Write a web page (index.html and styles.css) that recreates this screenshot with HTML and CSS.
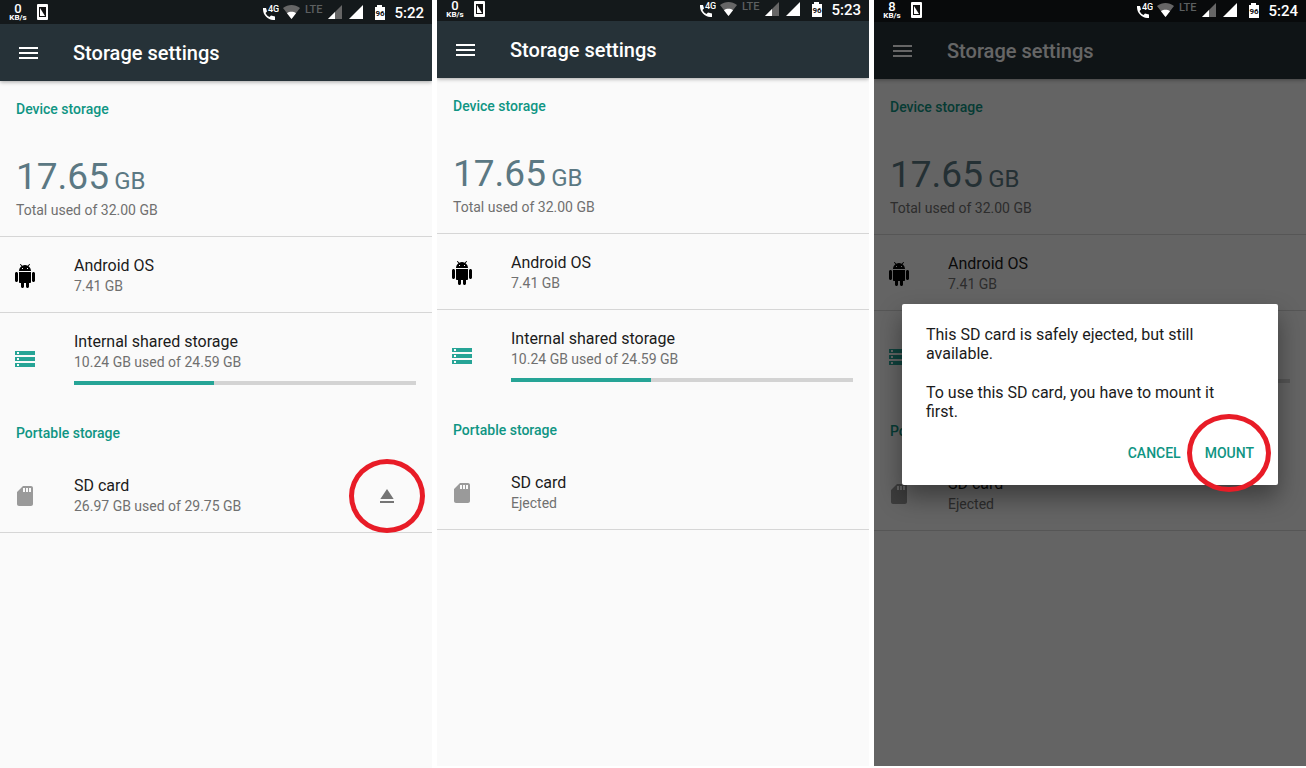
FILE: index.html
```html
<!DOCTYPE html>
<html lang="en">
<head>
	<meta charset="UTF-8">
	<title>Storage settings</title>
	<link rel="stylesheet" href="styles.css">
</head>
<body>
	<!-- shared icons -->
	<svg class="sprite" aria-hidden="true">
		<symbol id="i-card" viewBox="0 0 11 16">
			<rect width="11" height="16" rx="1" fill="#fff"/>
			<path d="M2 3h7v10H2z" fill="#111"/>
			<path d="M3 4v8h5z" fill="#fff"/>
		</symbol>
		<symbol id="i-call" viewBox="0 0 16 16">
			<path d="M0 4h3l1 3.500-1.500 1.500c1 2 2 3 4 4L8 11.500l4 1V16C5 16.500-.500 11 0 4z" fill="#fff"/>
			<text x="5" y="8" font-size="9" font-weight="500" fill="#fff">4G</text>
		</symbol>
		<symbol id="i-wifi" viewBox="0 0 18 16">
			<path d="M0 4C5 0 12 0 17 4L8.500 15z" fill="#666"/>
			<path d="M4 9.200C6.500 7.300 10.500 7.300 13 9.200L8.500 15z" fill="#fff"/>
		</symbol>
		<symbol id="i-signal-low" viewBox="0 0 18 16">
			<path d="M16 1v14H2z" fill="#666"/>
			<path d="M9 8v7H2z" fill="#fff"/>
		</symbol>
		<symbol id="i-signal" viewBox="0 0 18 16">
			<path d="M15 1v14H1z" fill="#fff"/>
		</symbol>
		<symbol id="i-battery" viewBox="0 0 20 16">
			<path d="M7 1h5v2h3v13H5V3h2z" fill="#fff"/>
			<text x="10" y="12" font-size="8" font-weight="700" text-anchor="middle" fill="#111">96</text>
		</symbol>
		<symbol id="i-menu" viewBox="0 0 24 24">
			<path d="M3 6h19v2H3zM3 11h19v2H3zM3 16h19v2H3z" fill="currentColor"/>
		</symbol>
		<symbol id="i-android" viewBox="0 0 24 24">
			<path d="M6 18c0 .55.45 1 1 1h1v3.500c0 .83.67 1.500 1.500 1.500s1.500-.67 1.500-1.500V19h2v3.500c0 .83.67 1.500 1.500 1.500s1.500-.67 1.500-1.500V19h1c.55 0 1-.45 1-1V8H6v10zM3.500 8C2.670 8 2 8.670 2 9.500v7c0 .83.67 1.500 1.500 1.500S5 17.330 5 16.500v-7C5 8.670 4.330 8 3.500 8zm17 0c-.83 0-1.500.67-1.500 1.500v7c0 .83.67 1.500 1.500 1.500s1.500-.67 1.500-1.500v-7c0-.83-.67-1.500-1.500-1.500zm-4.970-5.840l1.300-1.300c.2-.2.2-.51 0-.71-.2-.2-.51-.2-.71 0l-1.480 1.480C13.850 1.230 12.950 1 12 1c-.96 0-1.860.23-2.660.63L7.850.15c-.2-.2-.51-.2-.71 0-.2.2-.2.51 0 .71l1.310 1.310C6.970 3.260 6 5.010 6 7h12c0-1.990-.97-3.750-2.470-4.840zM10 5H9V4h1v1zm5 0h-1V4h1v1z"/>
		</symbol>
		<symbol id="i-storage" viewBox="0 0 24 24">
			<path d="M2 20h20v-4H2v4zm2-3h2v2H4v-2zM2 4v4h20V4H2zm4 3H4V5h2v2zm-4 7h20v-4H2v4zm2-3h2v2H4v-2z" fill="#26a496"/>
		</symbol>
		<symbol id="i-sd" viewBox="0 0 24 24">
			<path d="M18 2h-8L4 8v12c0 1.100.9 2 2 2h12c1.100 0 2-.9 2-2V4c0-1.100-.9-2-2-2zm-6 6h-2V4h2v4zm3 0h-2V4h2v4zm3 0h-2V4h2v4z" fill="#9a9a9a"/>
		</symbol>
		<symbol id="i-eject" viewBox="0 0 24 24">
			<path d="M5 17h14v2H5zm7-12L5.330 15h13.340z" fill="#757575"/>
		</symbol>
	</svg>

	<main class="phones">
		<div class="phone phone-a">
			<div class="status">
				<div class="speed"><b>0</b><small>KB/s</small></div>
				<svg class="card"><use href="#i-card"/></svg>
				<div class="tray">
					<svg class="w16"><use href="#i-call"/></svg>
					<svg class="w18"><use href="#i-wifi"/></svg>
					<span class="lte">LTE</span>
					<svg class="w18"><use href="#i-signal-low"/></svg>
					<svg class="w18"><use href="#i-signal"/></svg>
					<svg class="w20"><use href="#i-battery"/></svg>
					<span class="time">5:22</span>
				</div>
			</div>
			<header class="appbar">
				<button class="menu" aria-label="Menu"><svg class="icon"><use href="#i-menu"/></svg></button>
				<h1>Storage settings</h1>
			</header>
			<section>
				<h2>Device storage</h2>
				<div class="total">
					<p class="amount">17.65 <span>GB</span></p>
					<p class="sub">Total used of 32.00 GB</p>
				</div>
				<div class="row line">
					<svg class="icon"><use href="#i-android"/></svg>
					<div class="info">
						<h3>Android OS</h3>
						<p class="sub">7.41 GB</p>
					</div>
				</div>
				<div class="row">
					<svg class="icon"><use href="#i-storage"/></svg>
					<div class="info">
						<h3>Internal shared storage</h3>
						<p class="sub">10.24 GB used of 24.59 GB</p>
						<div class="bar"><div class="fill" style="width: 41%"></div></div>
					</div>
				</div>
			</section>
			<section>
				<h2>Portable storage</h2>
				<div class="row line">
					<svg class="icon"><use href="#i-sd"/></svg>
					<div class="info">
						<h3>SD card</h3>
						<p class="sub">26.97 GB used of 29.75 GB</p>
					</div>
					<button class="eject" aria-label="Eject">
						<svg class="icon"><use href="#i-eject"/></svg>
						<span class="ring ring-eject"></span>
					</button>
				</div>
			</section>
		</div>

		<div class="phone phone-b">
			<div class="status">
				<div class="speed"><b>0</b><small>KB/s</small></div>
				<svg class="card"><use href="#i-card"/></svg>
				<div class="tray">
					<svg class="w16"><use href="#i-call"/></svg>
					<svg class="w18"><use href="#i-wifi"/></svg>
					<span class="lte">LTE</span>
					<svg class="w18"><use href="#i-signal-low"/></svg>
					<svg class="w18"><use href="#i-signal"/></svg>
					<svg class="w20"><use href="#i-battery"/></svg>
					<span class="time">5:23</span>
				</div>
			</div>
			<header class="appbar">
				<button class="menu" aria-label="Menu"><svg class="icon"><use href="#i-menu"/></svg></button>
				<h1>Storage settings</h1>
			</header>
			<section>
				<h2>Device storage</h2>
				<div class="total">
					<p class="amount">17.65 <span>GB</span></p>
					<p class="sub">Total used of 32.00 GB</p>
				</div>
				<div class="row line">
					<svg class="icon"><use href="#i-android"/></svg>
					<div class="info">
						<h3>Android OS</h3>
						<p class="sub">7.41 GB</p>
					</div>
				</div>
				<div class="row">
					<svg class="icon"><use href="#i-storage"/></svg>
					<div class="info">
						<h3>Internal shared storage</h3>
						<p class="sub">10.24 GB used of 24.59 GB</p>
						<div class="bar"><div class="fill" style="width: 41%"></div></div>
					</div>
				</div>
			</section>
			<section>
				<h2>Portable storage</h2>
				<div class="row line">
					<svg class="icon"><use href="#i-sd"/></svg>
					<div class="info">
						<h3>SD card</h3>
						<p class="sub">Ejected</p>
					</div>
				</div>
			</section>
		</div>

		<div class="phone phone-c">
			<div class="status">
				<div class="speed"><b>8</b><small>KB/s</small></div>
				<svg class="card"><use href="#i-card"/></svg>
				<div class="tray">
					<svg class="w16"><use href="#i-call"/></svg>
					<svg class="w18"><use href="#i-wifi"/></svg>
					<span class="lte">LTE</span>
					<svg class="w18"><use href="#i-signal-low"/></svg>
					<svg class="w18"><use href="#i-signal"/></svg>
					<svg class="w20"><use href="#i-battery"/></svg>
					<span class="time">5:24</span>
				</div>
			</div>
			<header class="appbar">
				<button class="menu" aria-label="Menu"><svg class="icon"><use href="#i-menu"/></svg></button>
				<h1>Storage settings</h1>
			</header>
			<section>
				<h2>Device storage</h2>
				<div class="total">
					<p class="amount">17.65 <span>GB</span></p>
					<p class="sub">Total used of 32.00 GB</p>
				</div>
				<div class="row line">
					<svg class="icon"><use href="#i-android"/></svg>
					<div class="info">
						<h3>Android OS</h3>
						<p class="sub">7.41 GB</p>
					</div>
				</div>
				<div class="row">
					<svg class="icon"><use href="#i-storage"/></svg>
					<div class="info">
						<h3>Internal shared storage</h3>
						<p class="sub">10.24 GB used of 24.59 GB</p>
						<div class="bar"><div class="fill" style="width: 41%"></div></div>
					</div>
				</div>
			</section>
			<section>
				<h2>Portable storage</h2>
				<div class="row line">
					<svg class="icon"><use href="#i-sd"/></svg>
					<div class="info">
						<h3>SD card</h3>
						<p class="sub">Ejected</p>
					</div>
				</div>
			</section>
			<div class="scrim">
				<div class="dialog" role="dialog" aria-label="SD card">
					<p>This SD card is safely ejected, but still available.</p>
					<p>To use this SD card, you have to mount it first.</p>
					<div class="actions">
						<button>CANCEL</button>
						<button>MOUNT<span class="ring ring-mount"></span></button>
					</div>
				</div>
			</div>
		</div>
	</main>
</body>
</html>
```

FILE: styles.css
```css
*{
	margin: 0;
	padding: 0;
	box-sizing: border-box;
}
body{
	background: #fff;
	font-family: Roboto, "Liberation Sans", sans-serif;
	color: #1b1b1b;
}
button{
	border: 0;
	background: none;
	font: inherit;
	color: inherit;
}
svg{
	display: block;
}
.sprite{
	position: absolute;
	width: 0;
	height: 0;
}
.icon{
	width: 24px;
	height: 24px;
	flex: none;
}
.phones{
	display: grid;
	grid-template-columns: repeat(3, 1fr);
	gap: 5px;
	min-height: 100vh;
}
.phone{
	position: relative;
	background: #fafafa;
}
.phone-b,
.phone-c{
	margin-bottom: 2px;
}

/* status bar */
.status{
	display: flex;
	align-items: flex-start;
	padding: 4px 8px 4px 9px;
	background: #14191b;
	color: #fff;
}
.phone-b .status{
	padding-top: 1px;
}
.phone-c .status{
	position: relative;
	z-index: 2;
	padding-top: 2px;
	background: #080a0b;
}
.speed{
	display: flex;
	flex-direction: column;
	align-items: center;
	width: 18px;
	height: 16px;
	margin-right: 10px;
}
.speed b{
	font-size: 13px;
	font-weight: 500;
	line-height: 10px;
}
.speed small{
	font-size: 8px;
	font-weight: 700;
	line-height: 8px;
}
.card{
	width: 11px;
	height: 16px;
}
.tray{
	display: flex;
	gap: 4px;
	height: 16px;
	margin-left: auto;
}
.tray svg{
	height: 16px;
}
.w16{
	width: 16px;
}
.w18{
	width: 18px;
}
.w20{
	width: 20px;
}
.lte{
	font-size: 11px;
	font-weight: 500;
	line-height: 11px;
	color: #5c5f60;
}
.time{
	font-size: 15px;
	font-weight: 500;
	line-height: 18px;
}

/* app bar */
.appbar{
	display: flex;
	align-items: center;
	gap: 33px;
	height: 57px;
	padding: 0 16px;
	background: #263238;
	color: #fff;
	box-shadow: 0 1px 4px rgba(0,0,0,.35);
	clip-path: inset(0 0 -8px 0);
}
.appbar h1{
	font-size: 20px;
	font-weight: 500;
	line-height: 26px;
}

/* content */
h2{
	padding: 18px 16px 14px;
	font-size: 14px;
	font-weight: 500;
	line-height: 20px;
	color: #0f9583;
}
section + section{
	margin-top: 4px;
}
.sub{
	font-size: 14px;
	line-height: 20px;
	color: #707070;
}
.total{
	padding: 21px 16px 16px;
	border-bottom: 1px solid #d6d6d6;
}
.amount{
	font-size: 37px;
	line-height: 46px;
	color: #5b7883;
}
.amount span{
	margin-left: -4px;
	font-size: 24px;
	line-height: 24px;
}
.row{
	display: flex;
	align-items: center;
	padding: 19px 16px 16px 13px;
}
.line{
	border-bottom: 1px solid #d6d6d6;
}
.info{
	flex: 1;
	margin-left: 37px;
}
.info h3{
	font-size: 16px;
	font-weight: 400;
	line-height: 20px;
}
.bar{
	height: 4px;
	margin-top: 9px;
	background: #d3d3d3;
}
.fill{
	height: 4px;
	background: #26a496;
}
.eject{
	position: relative;
	display: flex;
	align-items: center;
	justify-content: center;
	width: 58px;
	height: 40px;
}

/* red marker round a button */
.ring{
	position: absolute;
	top: 50%;
	left: 50%;
	border: 5px solid #e81c27;
	border-radius: 50%;
	transform: translate(-50%, -50%);
}
.ring-eject{
	width: 76px;
	height: 74px;
}
.ring-mount{
	width: 84px;
	height: 78px;
}

/* dialog */
.scrim{
	position: absolute;
	top: 0;
	right: 0;
	bottom: 0;
	left: 0;
	padding: 304px 28px 0;
	background: rgba(0,0,0,.6);
}
.dialog{
	padding: 21px 24px 14px;
	border-radius: 2px;
	background: #fff;
	box-shadow: 0 12px 24px rgba(0,0,0,.4);
}
.dialog p{
	padding-right: 16px;
	font-size: 16px;
	line-height: 19px;
}
.dialog p + p{
	margin-top: 20px;
}
.actions{
	display: flex;
	justify-content: flex-end;
	gap: 8px;
	margin: 14px -8px 0 0;
}
.actions button{
	position: relative;
	height: 36px;
	padding: 0 8px;
	font-size: 14px;
	font-weight: 500;
	color: #0f9583;
}
```
